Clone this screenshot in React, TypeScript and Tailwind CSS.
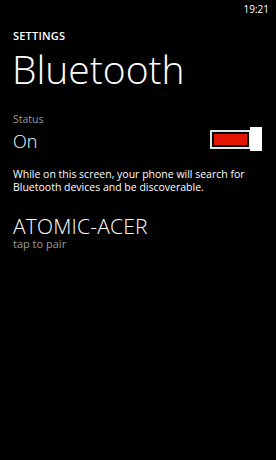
export default function App() {
  return (
    <div
      className="h-[460px] w-[276px] overflow-hidden bg-black text-white"
      style={{ fontFamily: '"Open Sans", "Noto Sans", sans-serif' }}
    >
      <div className="flex justify-end pr-[7px] pt-[2px] text-[10px] leading-[14px]">19:21</div>

      <div className="pl-[13px]">
        <div className="mt-[13px] text-[11px] font-semibold leading-[13px] tracking-[0.2px]">SETTINGS</div>
        <div className="-ml-[1px] text-[39px] font-light leading-[53px]">Bluetooth</div>

        <div className="mt-[18px] text-[10.5px] leading-[13px] text-[#9a9a9a]">Status</div>
        <div className="mt-[3px] flex items-start justify-between pr-[14px]">
          <div className="text-[18px] font-light leading-[24px]">On</div>
          <div className="-mt-[2px] flex items-center">
            <div className="flex h-[19px] w-[41px] items-center border-2 border-[#e6e6e6] p-[2px]">
              <div className="h-full w-full bg-[#e51400]" />
            </div>
            <div className="-ml-[1px] h-[24px] w-[12px] bg-white" />
          </div>
        </div>

        <p className="mt-[15px] pr-[10px] text-[10.5px] leading-[13px]">
          While on this screen, your phone will search for Bluetooth devices and be discoverable.
        </p>

        <div className="mt-[20px] text-[21px] font-light leading-[24px] tracking-[0.2px]">ATOMIC-ACER</div>
        <div className="-mt-[1px] text-[11px] leading-[14px] text-[#9a9a9a]">tap to pair</div>
      </div>
    </div>
  );
}
